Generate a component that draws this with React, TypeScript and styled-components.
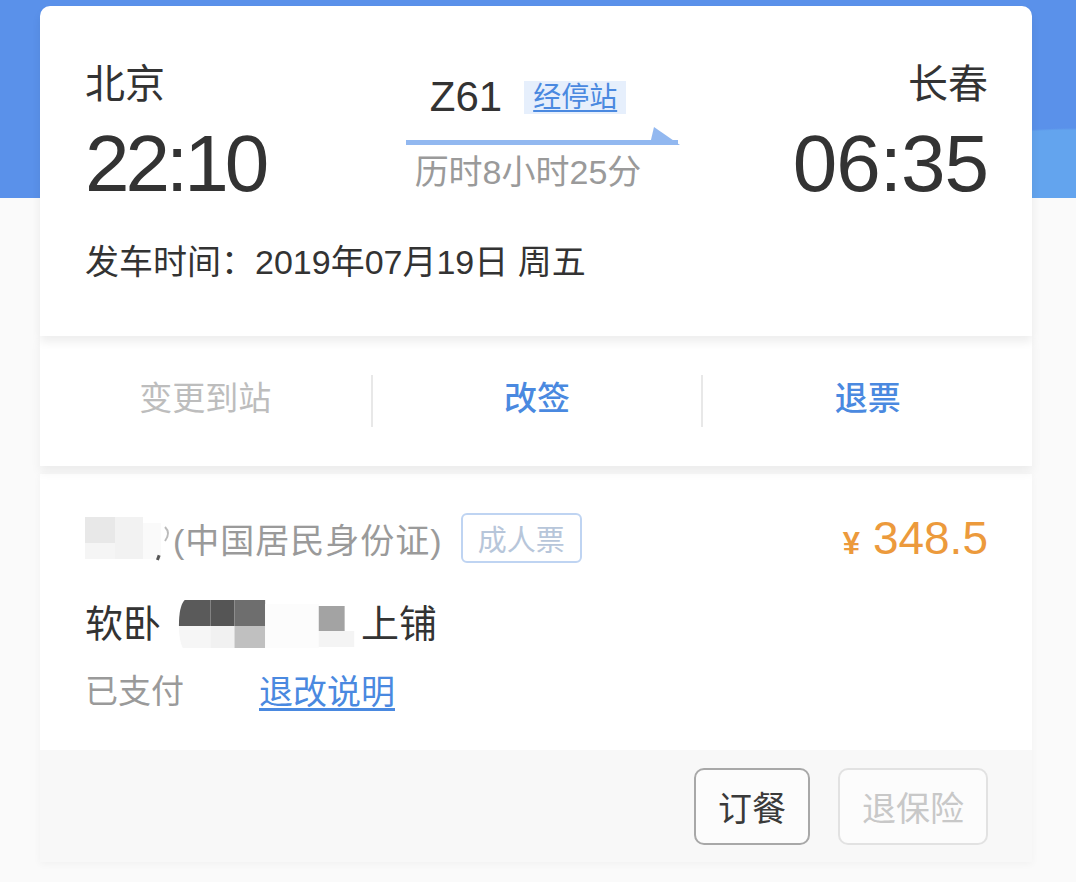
import React from "react";
import styled, { createGlobalStyle } from "styled-components";

const FONT = `"Liberation Sans", "Noto Sans CJK SC", sans-serif`;
const BLUE = "#4a89e0";

const GlobalStyle = createGlobalStyle`
  html, body {
    margin: 0;
    padding: 0;
    background: #fafafa;
  }
  body {
    font-family: ${FONT};
    color: #333;
  }
`;

const Page = styled.div`
  min-height: 100vh;
  box-sizing: border-box;
  padding: 6px 44px 20px 40px;
  background:
    radial-gradient(ellipse 220px 70px at 100% 100%, #63a4ee 0%, #63a4ee 97%, transparent 100%) 0 0 / 100% 198px no-repeat,
    linear-gradient(#5a91ea, #5a91ea) 0 0 / 100% 198px no-repeat,
    #fafafa;
`;

const RouteCard = styled.section`
  position: relative;
  z-index: 3;
  height: 330px;
  box-sizing: border-box;
  padding: 54px 44px 0 45px;
  background: #fff;
  border-radius: 10px 10px 0 0;
  box-shadow: 0 6px 10px rgba(0, 0, 0, 0.07);
`;

const RouteRow = styled.div`
  display: grid;
  grid-template-columns: 321px 274px 1fr;
`;

const StationCol = styled.div<{ $align: "left" | "right" }>`
  display: flex;
  flex-direction: column;
  align-items: ${p => (p.$align === "left" ? "flex-start" : "flex-end")};
`;

const StationName = styled.div`
  font-size: 40px;
  line-height: 48px;
  color: #333;
`;

const Clock = styled.div<{ $spacing: number }>`
  margin-top: 16px;
  font-size: 80px;
  line-height: 80px;
  letter-spacing: ${p => p.$spacing}px;
  color: #333;
`;

const CenterCol = styled.div`
  display: flex;
  flex-direction: column;
  align-items: center;
  padding-top: 13px;
`;

const TrainRow = styled.div`
  display: flex;
  align-items: center;
  margin-right: 30px;
`;

const TrainNo = styled.span`
  font-size: 42px;
  line-height: 48px;
  color: #333;
`;

const StopsBadge = styled.span`
  margin-left: 22px;
  height: 33px;
  line-height: 33px;
  padding: 0 9px;
  background: #e6effc;
  color: ${BLUE};
  font-size: 28px;
  text-decoration: underline;
  text-underline-offset: 3px;
`;

const ArrowSvg = styled.svg`
  display: block;
  margin-top: 5px;
`;

const Duration = styled.div`
  margin-top: 2px;
  margin-right: 30px;
  font-size: 34px;
  line-height: 40px;
  color: #9a9a9a;
`;

const DepartLine = styled.div`
  margin-top: 38px;
  font-size: 34px;
  line-height: 40px;
  color: #333;
`;

const ActionBar = styled.nav`
  position: relative;
  z-index: 2;
  height: 130px;
  display: grid;
  grid-template-columns: repeat(3, 1fr);
  align-items: center;
  background: #fff;
  box-shadow: 0 6px 10px rgba(0, 0, 0, 0.06);
`;

const ActionItem = styled.div<{ $enabled: boolean; $divider: boolean }>`
  height: 52px;
  display: flex;
  align-items: center;
  justify-content: center;
  padding-bottom: 10px;
  box-sizing: border-box;
  border-left: ${p => (p.$divider ? "2px solid #e8e8e8" : "none")};
  font-size: 33px;
  font-weight: ${p => (p.$enabled ? 500 : 400)};
  color: ${p => (p.$enabled ? BLUE : "#bdbdbd")};
`;

const PassengerCard = styled.section`
  position: relative;
  z-index: 1;
  margin-top: 8px;
  background: #fff;
  box-shadow: 0 2px 8px rgba(0, 0, 0, 0.04);
`;

const PassengerBody = styled.div`
  height: 276px;
  box-sizing: border-box;
  padding: 39px 44px 0 45px;
`;

const IdRow = styled.div`
  display: flex;
  align-items: center;
  justify-content: space-between;
  height: 50px;
`;

const IdLeft = styled.div`
  display: flex;
  align-items: center;
`;

const IdType = styled.span`
  font-size: 34px;
  color: #9a9a9a;
  letter-spacing: 1px;
`;

const TicketTag = styled.span`
  margin-left: 18px;
  height: 50px;
  box-sizing: border-box;
  padding: 0 15px;
  display: flex;
  align-items: center;
  border: 2px solid #bfd4f2;
  border-radius: 6px;
  font-size: 29px;
  color: #b7c6da;
`;

const Price = styled.div`
  display: flex;
  align-items: baseline;
  color: #ec9a3c;
`;

const Yen = styled.span`
  font-size: 31px;
  font-weight: 700;
  margin-right: 13px;
`;

const Amount = styled.span`
  font-size: 46px;
`;

const SeatRow = styled.div`
  margin-top: 33px;
  display: flex;
  align-items: center;
  font-size: 38px;
  line-height: 48px;
  color: #333;
`;

const SeatMaskSvg = styled.svg`
  margin: 0 2px 0 16px;
`;

const StatusRow = styled.div`
  margin-top: 20px;
  display: flex;
  align-items: center;
  font-size: 33px;
  line-height: 40px;
`;

const StatusText = styled.span`
  color: #9a9a9a;
`;

const RefundLink = styled.a`
  margin-left: 75px;
  color: ${BLUE};
  font-size: 34px;
  text-decoration: underline;
  text-underline-offset: 4px;
`;

const CardFooter = styled.div`
  height: 112px;
  box-sizing: border-box;
  padding: 18px 44px 0;
  display: flex;
  justify-content: flex-end;
  align-items: flex-start;
  gap: 28px;
  background: #f8f8f8;
`;

const FooterButton = styled.button<{ $enabled: boolean }>`
  height: 77px;
  padding: 0 22px;
  font-family: ${FONT};
  font-size: 34px;
  background: #fcfcfc;
  border: 2px solid ${p => (p.$enabled ? "#a8a8a8" : "#e2e2e2")};
  border-radius: 10px;
  color: ${p => (p.$enabled ? "#3a3a3a" : "#c8c8c8")};
`;

const NameMask = () => (
  <svg width="88" height="50" viewBox="0 0 88 50">
    <rect x="0" y="4" width="30" height="26" fill="#e8e8e8" />
    <rect x="0" y="30" width="30" height="16" fill="#f5f5f5" />
    <rect x="30" y="4" width="28" height="42" fill="#f2f2f2" />
    <rect x="58" y="10" width="18" height="36" fill="#fafafa" />
    <rect x="72" y="42" width="3" height="5" fill="#555" transform="rotate(20 73 44)" />
    <path d="M80 14 q6 6 0 14" stroke="#bbb" strokeWidth="2" fill="none" />
  </svg>
);

const SeatMask = () => (
  <SeatMaskSvg width="182" height="56" viewBox="0 0 190 56" preserveAspectRatio="none">
    <path d="M8 4 H35 V30 H2 Q2 10 8 4 Z" fill="#5a5a5a" />
    <rect x="35" y="4" width="25" height="26" fill="#555" />
    <rect x="60" y="4" width="32" height="26" fill="#6e6e6e" />
    <path d="M2 30 H35 V52 H6 Q2 44 2 30 Z" fill="#f6f6f6" />
    <rect x="35" y="30" width="25" height="22" fill="#f1f1f1" />
    <rect x="60" y="30" width="32" height="22" fill="#c0c0c0" />
    <rect x="92" y="8" width="56" height="44" fill="#fcfcfc" />
    <rect x="148" y="10" width="27" height="25" fill="#a3a3a3" />
    <rect x="148" y="35" width="37" height="16" fill="#f4f4f4" />
  </SeatMaskSvg>
);

export default function App() {
  return (
    <>
      <GlobalStyle />
      <Page>
        <RouteCard>
          <RouteRow>
            <StationCol $align="left">
              <StationName>北京</StationName>
              <Clock $spacing={-4}>22:10</Clock>
            </StationCol>
            <CenterCol>
              <TrainRow>
                <TrainNo>Z61</TrainNo>
                <StopsBadge>经停站</StopsBadge>
              </TrainRow>
              <ArrowSvg width="274" height="24" viewBox="0 0 274 24">
                <rect x="0" y="14" width="272" height="5" fill="#92b8f0" />
                <polygon points="244,18 248,1 274,19 244,19" fill="#92b8f0" />
              </ArrowSvg>
              <Duration>历时8小时25分</Duration>
            </CenterCol>
            <StationCol $align="right">
              <StationName>长春</StationName>
              <Clock $spacing={-1}>06:35</Clock>
            </StationCol>
          </RouteRow>
          <DepartLine>发车时间：2019年07月19日 周五</DepartLine>
        </RouteCard>

        <ActionBar>
          <ActionItem $enabled={false} $divider={false}>变更到站</ActionItem>
          <ActionItem $enabled $divider>改签</ActionItem>
          <ActionItem $enabled $divider>退票</ActionItem>
        </ActionBar>

        <PassengerCard>
          <PassengerBody>
            <IdRow>
              <IdLeft>
                <NameMask />
                <IdType>(中国居民身份证)</IdType>
                <TicketTag>成人票</TicketTag>
              </IdLeft>
              <Price>
                <Yen>¥</Yen>
                <Amount>348.5</Amount>
              </Price>
            </IdRow>
            <SeatRow>
              软卧
              <SeatMask />
              上铺
            </SeatRow>
            <StatusRow>
              <StatusText>已支付</StatusText>
              <RefundLink>退改说明</RefundLink>
            </StatusRow>
          </PassengerBody>
          <CardFooter>
            <FooterButton $enabled>订餐</FooterButton>
            <FooterButton $enabled={false}>退保险</FooterButton>
          </CardFooter>
        </PassengerCard>
      </Page>
    </>
  );
}
